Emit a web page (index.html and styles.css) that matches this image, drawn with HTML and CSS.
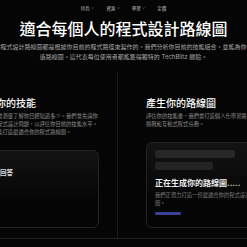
FILE: index.html
```html
<!DOCTYPE html>
<html lang="zh-Hant">
<head>
  <meta charset="UTF-8" />
  <meta name="viewport" content="width=device-width, initial-scale=1.0"/>
  <title>TechBlitz 路線圖</title>
  <link rel="stylesheet" href="styles.css">
</head>
<body>
  <nav class="nav">
    <a class="nav-item" href="#">特色 <svg class="chev" viewBox="0 0 6 4"><path d="M1 1l2 2 2-2"/></svg></a>
    <a class="nav-item" href="#">資源 <svg class="chev" viewBox="0 0 6 4"><path d="M1 1l2 2 2-2"/></svg></a>
    <a class="nav-item" href="#">學習 <svg class="chev" viewBox="0 0 6 4"><path d="M1 1l2 2 2-2"/></svg></a>
    <a class="nav-item" href="#">定價</a>
  </nav>

  <header class="hero">
    <h1 class="hero-title">適合每個人的程式設計路線圖</h1>
    <p class="hero-lead">
      我們的程式設計路線圖都是根據你目前的程式路徑來製作的。我們分析你目前的技能組合，並能為你量身打造路線圖。這代表每位使用者都能獲得獨特的 TechBlitz 體驗。
    </p>
  </header>

  <section class="features">
    <!-- 技能評估 -->
    <div class="feature feature-left">
      <h2 class="feature-title">評估你的技能</h2>
      <p class="feature-text">我們首先會測量了解你已經知道多少。我們會先請你回答幾個程式設計問題，以評估你目前的技能水平。這讓我們能打造最適合你的程式路線圖。</p>
      <div class="card">
        <span class="quiz-label">你的回答</span>
      </div>
    </div>

    <!-- 產生路線圖 -->
    <div class="feature">
      <h2 class="feature-title">產生你的路線圖</h2>
      <p class="feature-text">評估你的技能後，我們會打造個人化學習路徑，包含挑戰和互動式程式任務。</p>
      <div class="card card-loading">
        <div class="skeleton skeleton-long"></div>
        <div class="skeleton skeleton-short"></div>
        <h3 class="loading-title">正在生成你的路線圖.....</h3>
        <p class="loading-text">我們正努力打造一份最適合你的程式設計路線圖。</p>
        <div class="progress"></div>
      </div>
    </div>
  </section>
</body>
</html>
```

FILE: styles.css
```css
:root {
  --bg: #050505;
  --line: #222;
  --muted: #8f8f8f;
  --accent: #3c4196;
  --font-body: 'Inter', 'Noto Sans CJK TC', sans-serif;
}

body {
  margin: 0;
  background-color: var(--bg);
  font-family: var(--font-body);
  color: white;
  overflow: hidden;
}

/* 導覽列 */
.nav {
  height: 16px;
  display: flex;
  justify-content: center;
  align-items: center;
  gap: 12px;
}

.nav-item {
  display: flex;
  align-items: center;
  gap: 1.5px;
  font-size: 4.5px;
  color: #bdbdbd;
  text-decoration: none;
}

.chev {
  width: 3px;
  height: 2px;
  fill: none;
  stroke: #999;
  stroke-width: 1;
}

/* 標題區 */
.hero {
  display: flex;
  flex-direction: column;
  align-items: center;
  text-align: center;
}

.hero-title {
  margin: 4px 0 0;
  font-size: 16px;
  line-height: 19px;
  font-weight: 500;
  white-space: nowrap;
}

.hero-lead {
  flex: none;
  width: 283px;
  margin: 3px 0 0;
  font-size: 6px;
  line-height: 10px;
  color: #a3a3a3;
}

/* 兩欄功能 */
.features {
  display: grid;
  grid-template-columns: 170px 170px;
  width: 340px;
  height: 166px;
  margin: 10px 0 0 -52px;
  border-bottom: 1px solid var(--line);
}

.feature {
  display: flex;
  flex-direction: column;
  padding: 25px 18px 10px 28px;
}

.feature-left {
  border-right: 1px solid #1c1c1c;
}

.feature-title {
  margin: 0 0 2px;
  font-size: 10px;
  line-height: 13px;
  font-weight: 500;
}

.feature-text {
  margin: 0;
  font-size: 5.3px;
  line-height: 8px;
  color: var(--muted);
}

.card {
  flex: 1;
  margin-top: 14px;
  padding: 8px 10px;
  border: 1px solid #232323;
  border-radius: 6px;
  background: linear-gradient(to bottom, #131313, #050505 70%);
}

.quiz-label {
  font-size: 6.5px;
  font-weight: bold;
  color: #ddd;
}

.card-loading {
  padding: 7px 8px;
}

.skeleton {
  height: 8px;
  border-radius: 2px;
  background: #272727;
}

.skeleton-long {
  width: 80px;
}

.skeleton-short {
  width: 58px;
  margin-top: 4px;
  background: #232323;
}

.loading-title {
  margin: 8px 0 0;
  font-size: 8px;
  line-height: 10px;
  font-weight: bold;
  color: #eee;
}

.loading-text {
  margin: 3px 0 0;
  font-size: 5.3px;
  line-height: 8px;
  color: #7d7d7d;
}

.progress {
  width: 26px;
  height: 2.5px;
  margin-top: 5px;
  border-radius: 1px;
  background: var(--accent);
}
```
